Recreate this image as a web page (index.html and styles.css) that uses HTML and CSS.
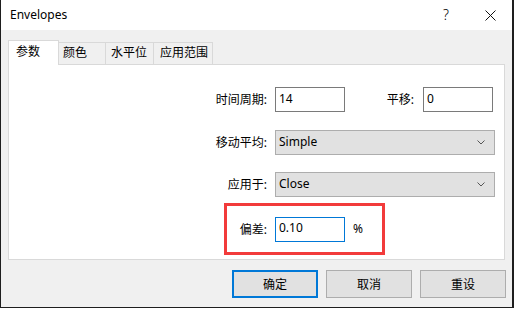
FILE: index.html
```html
<!DOCTYPE html>
<html>
<head>
<meta charset="utf-8">
<title>Envelopes</title>
<link rel="stylesheet" href="styles.css">
</head>
<body>
<div class="window">
  <div class="titlebar">
    <span class="title">Envelopes</span>
    <span class="tb-btn help">?</span>
    <span class="tb-btn close"><svg width="11" height="11" viewBox="0 0 11 11"><path d="M0.5 0.5L10.5 10.5M10.5 0.5L0.5 10.5" stroke="#111" stroke-width="1" fill="none"/></svg></span>
  </div>
  <div class="content">
    <div class="tabs">
      <div class="tab active">参数</div>
      <div class="tab t-color">颜色</div>
      <div class="tab t-level">水平位</div>
      <div class="tab t-apply">应用范围</div>
    </div>
    <div class="panel">
      <div class="row row-period">
        <span class="lbl lbl-main">时间周期:</span>
        <div class="edit">14</div>
        <span class="lbl lbl-shift">平移:</span>
        <div class="edit">0</div>
      </div>
      <div class="row row-ma">
        <span class="lbl lbl-main">移动平均:</span>
        <div class="combo"><span>Simple</span><svg class="chev" width="8" height="5" viewBox="0 0 8 5"><path d="M0.5 0.5L4 4L7.5 0.5" stroke="#555" stroke-width="1" fill="none"/></svg></div>
      </div>
      <div class="row row-apply">
        <span class="lbl lbl-main">应用于:</span>
        <div class="combo"><span>Close</span><svg class="chev" width="8" height="5" viewBox="0 0 8 5"><path d="M0.5 0.5L4 4L7.5 0.5" stroke="#555" stroke-width="1" fill="none"/></svg></div>
      </div>
      <div class="highlight">
        <span class="lbl lbl-dev">偏差:</span>
        <div class="edit focused">0.10</div>
        <span class="pct">%</span>
      </div>
    </div>
    <div class="buttons">
      <div class="btn default">确定</div>
      <div class="btn">取消</div>
      <div class="btn">重设</div>
    </div>
  </div>
</div>
</body>
</html>
```
FILE: styles.css
```css
* { box-sizing: border-box; }
html, body { margin: 0; padding: 0; }
body {
  width: 514px;
  height: 309px;
  background: #ffffff;
  font-family: "Noto Sans", "Noto Sans CJK SC", sans-serif;
  font-size: 12px;
  color: #000;
  overflow: hidden;
}
.window {
  width: 514px;
  height: 308px;
  border-left: 1px solid #1e1e1e;
  border-right: 2px solid #1e1e1e;
  border-bottom: 1px solid #1e1e1e;
  background: #f0f0f0;
  display: flex;
  flex-direction: column;
}
.titlebar {
  height: 30px;
  background: #fff;
  display: flex;
  align-items: center;
  flex: none;
}
.title {
  flex: 1;
  padding-left: 9px;
  padding-bottom: 1px;
  font-size: 12px;
}
.tb-btn {
  width: 45px;
  height: 30px;
  display: flex;
  align-items: center;
  justify-content: center;
}
.help {
  font-size: 14px;
  font-weight: 300;
  padding-left: 3px;
  padding-bottom: 1px;
}
.close { padding-left: 2px; }
.content {
  padding: 10px 0 0 7px;
  flex: 1;
}
.tabs {
  display: flex;
  align-items: flex-end;
  height: 24px;
}
.tab {
  height: 22px;
  line-height: 20px;
  border-top: 1px solid #d9d9d9;
  border-right: 1px solid #d9d9d9;
  background: #f0f0f0;
  padding-left: 5px;
}
.tab.active {
  position: relative;
  z-index: 1;
  width: 51px;
  height: 25px;
  margin-bottom: -1px;
  line-height: 22px;
  background: #fff;
  border-left: 1px solid #d9d9d9;
  padding-left: 7px;
}
.t-color { width: 47px; padding-left: 4px; }
.t-level { width: 48px; padding-left: 5px; }
.t-apply { width: 59px; padding-left: 6px; }
.panel {
  width: 497px;
  height: 196px;
  background: #fff;
  border: 1px solid #d9d9d9;
}
.row {
  display: flex;
  align-items: center;
  height: 25px;
}
.row-period { margin-top: 22px; }
.row-ma { margin-top: 18px; }
.row-apply { margin-top: 17px; }
.lbl {
  text-align: right;
  white-space: nowrap;
  padding-bottom: 1px;
}
.lbl-main { width: 258px; margin-right: 8px; }
.lbl-shift { width: 69px; margin-right: 9px; }
.lbl-dev { width: 40px; margin-right: 8px; }
.edit {
  width: 70px;
  height: 25px;
  border: 1px solid #7a7a7a;
  background: #fff;
  padding: 0 0 3px 3px;
  display: flex;
  align-items: center;
}
.edit.focused { border-color: #0078d7; }
.combo {
  width: 220px;
  height: 25px;
  border: 1px solid #adadad;
  background: #e1e1e1;
  display: flex;
  align-items: center;
  justify-content: space-between;
  padding: 0 9px 2px 3px;
}
.chev { margin-top: 2px; }
.highlight {
  margin-top: 6px;
  margin-left: 215px;
  width: 161px;
  height: 52px;
  border: 3px solid #f23b3b;
  display: flex;
  align-items: center;
}
.pct { margin-left: 8px; padding-bottom: 1px; }
.buttons {
  display: flex;
  gap: 8px;
  margin-top: 10px;
  padding-left: 224px;
}
.btn {
  width: 86px;
  height: 28px;
  border: 1px solid #adadad;
  background: #e1e1e1;
  display: flex;
  align-items: center;
  justify-content: center;
  padding-bottom: 1px;
}
.btn.default { border: 2px solid #0078d7; }
```
